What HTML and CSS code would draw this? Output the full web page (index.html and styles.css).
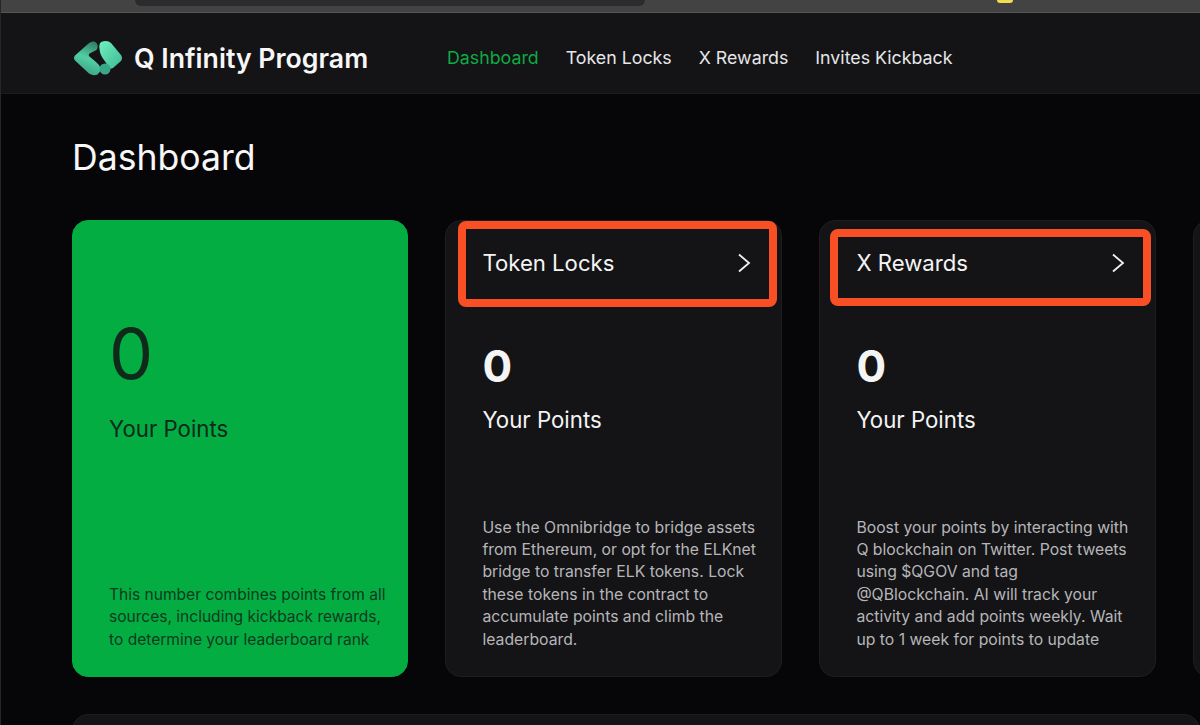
FILE: index.html
```html
<!DOCTYPE html>
<html lang="en">
<head>
    <meta charset="UTF-8">
    <meta name="viewport" content="width=device-width, initial-scale=1.0">
    <title>Q Infinity Program</title>
    <link rel="stylesheet" href="styles.css">
</head>
<body>
    <!-- Browser chrome cut off at the top of the capture -->
    <div class="browser-bar">
        <div class="url-pill"></div>
        <div class="ext-dot"></div>
    </div>

    <header class="topnav">
        <div class="brand">
            <svg class="brand-logo" width="50" height="36" viewBox="0 0 50 36">
                <defs>
                    <linearGradient id="logo-left" x1="0.7" y1="0" x2="0.4" y2="1">
                        <stop offset="0" stop-color="#2f7f68"/>
                        <stop offset="0.5" stop-color="#52cfa2"/>
                        <stop offset="1" stop-color="#3a9f82"/>
                    </linearGradient>
                    <linearGradient id="logo-right" x1="0" y1="0" x2="1" y2="1">
                        <stop offset="0" stop-color="#6ff0c0"/>
                        <stop offset="1" stop-color="#3fb892"/>
                    </linearGradient>
                </defs>
                <path d="M15.5 3.5 L2 15.5 Q0 18 2 20.5 L16 33.5 Q20.5 36.5 24.5 34.5 Q28.5 32 27 27 Q26 24.5 23 22 L16.5 16.5 Q15 15 16.5 13.5 L23.5 10 Q26 6.5 23.5 3 Q20 0 15.5 3.5 Z" fill="url(#logo-left)"/>
                <path d="M27 3 Q29 0.8 33 1 Q36 1 38 3 L48 15 Q50 18 48 21 L40 28 Q36 30 34.5 26 Q33.5 23 31 20 Q27 15 26.5 9 Q26 5 27 3 Z" fill="url(#logo-right)"/>
                <circle cx="32" cy="29" r="5.5" fill="#3aa888"/>
            </svg>
            <span class="brand-name">Q Infinity Program</span>
        </div>
        <nav class="nav-links">
            <a class="nav-link active" href="#">Dashboard</a>
            <a class="nav-link" href="#">Token Locks</a>
            <a class="nav-link" href="#">X Rewards</a>
            <a class="nav-link" href="#">Invites Kickback</a>
        </nav>
    </header>

    <main class="content">
        <h1 class="page-title">Dashboard</h1>

        <div class="cards">
            <div class="card card-total">
                <div class="total-value">0</div>
                <div class="points-label">Your Points</div>
                <p class="card-text">This number combines points from all sources, including kickback rewards, to determine your leaderboard rank</p>
            </div>

            <div class="card">
                <div class="card-head">
                    <span>Token Locks</span>
                    <svg class="chevron" width="14" height="20" viewBox="0 0 14 20"><path d="M2 1.5 L12 10 L2 18.5"/></svg>
                </div>
                <div class="mark mark-locks"></div>
                <div class="card-value">0</div>
                <div class="points-label">Your Points</div>
                <p class="card-text">Use the Omnibridge to bridge assets from Ethereum, or opt for the ELKnet bridge to transfer ELK tokens. Lock these tokens in the contract to accumulate points and climb the leaderboard.</p>
            </div>

            <div class="card">
                <div class="card-head">
                    <span>X Rewards</span>
                    <svg class="chevron" width="14" height="20" viewBox="0 0 14 20"><path d="M2 1.5 L12 10 L2 18.5"/></svg>
                </div>
                <div class="mark mark-rewards"></div>
                <div class="card-value">0</div>
                <div class="points-label">Your Points</div>
                <p class="card-text">Boost your points by interacting with Q blockchain on Twitter. Post tweets using $QGOV and tag @QBlockchain. AI will track your activity and add points weekly. Wait up to 1 week for points to update</p>
            </div>

            <div class="card"></div>
        </div>

        <div class="lower-panel"></div>
    </main>
</body>
</html>
```

FILE: styles.css
```css
html, body {
    margin: 0;
    height: 725px;
    overflow: hidden;
}
body {
    font-family: Inter, "Liberation Sans", sans-serif;
    background-color: #060608;
    color: #f4f4f5;
    border-left: 1px solid #26262a;
    box-sizing: border-box;
}
.browser-bar {
    height: 13px;
    background-color: #434343;
    display: flex;
    border-bottom: 1px solid #555;
    box-sizing: border-box;
}
.url-pill {
    width: 510px;
    height: 6px;
    margin-left: 134px;
    background-color: #2b2b2d;
    border-radius: 0 0 12px 12px;
}
.ext-dot {
    width: 16px;
    height: 3px;
    margin-left: 352px;
    background-color: #f4dc4e;
    border-radius: 0 0 4px 4px;
}
.topnav {
    height: 81px;
    box-sizing: border-box;
    background-color: #141416;
    border-bottom: 1px solid #1c1c1f;
    padding: 9px 0 0 72px;
    display: flex;
    align-items: center;
}
.brand {
    display: flex;
    align-items: center;
    gap: 11px;
    width: 374px;
}
.brand-name {
    font-size: 26.7px;
    font-weight: 600;
    color: #f7f7f7;
}
.nav-links {
    display: flex;
    gap: 27px;
}
.nav-link {
    font-size: 17.8px;
    color: #e6e6e8;
    text-decoration: none;
}
.nav-link.active {
    color: #0eaa45;
}
.content {
    padding-left: 71px;
}
.page-title {
    margin: 39px 0 37px;
    font-size: 35.6px;
    line-height: 50px;
    font-weight: 400;
    color: #f7f7f7;
}
.cards {
    display: flex;
    gap: 37px;
}
.card {
    position: relative;
    flex: 0 0 337px;
    height: 457px;
    box-sizing: border-box;
    padding: 0 22px 25px 36px;
    background-color: #141416;
    border: 1px solid #1e1e21;
    border-radius: 16px;
    display: flex;
    flex-direction: column;
}
.card-total {
    flex-basis: 336.4px;
    background-color: #03ad42;
    border-color: #03ad42;
    color: #0f2a1a;
    padding-top: 95px;
    padding-right: 18px;
}
.total-value {
    font-size: 70px;
    line-height: 76px;
}
.card-total .points-label {
    margin-top: 22px;
}
.card-head {
    height: 84px;
    margin-right: 8px;
    display: flex;
    align-items: center;
    justify-content: space-between;
    font-size: 22.15px;
}
.chevron {
    fill: none;
    stroke: #f0f0f0;
    stroke-width: 1.8;
}
/* red annotation boxes drawn on top of the screenshot */
.mark {
    position: absolute;
    box-sizing: border-box;
    border: 8px solid #f84f24;
    border-radius: 8px;
}
.mark-locks {
    top: 0;
    left: 12px;
    width: 319px;
    height: 86px;
}
.mark-rewards {
    top: 8px;
    left: 10px;
    width: 321px;
    height: 77px;
}
.card-value {
    margin-top: 36px;
    font-size: 44px;
    line-height: 50px;
    font-weight: 700;
}
.points-label {
    margin-top: 14px;
    font-size: 22.25px;
    line-height: 30px;
}
.card-text {
    margin: auto 0 0;
    font-size: 15.75px;
    line-height: 22.4px;
    color: #b6b6ba;
}
.card-total .card-text {
    font-size: 15.55px;
    color: #0f3a20;
}
.lower-panel {
    margin-top: 37px;
    height: 120px;
    background-color: #141416;
    border: 1px solid #1e1e21;
    border-radius: 16px;
}
```
